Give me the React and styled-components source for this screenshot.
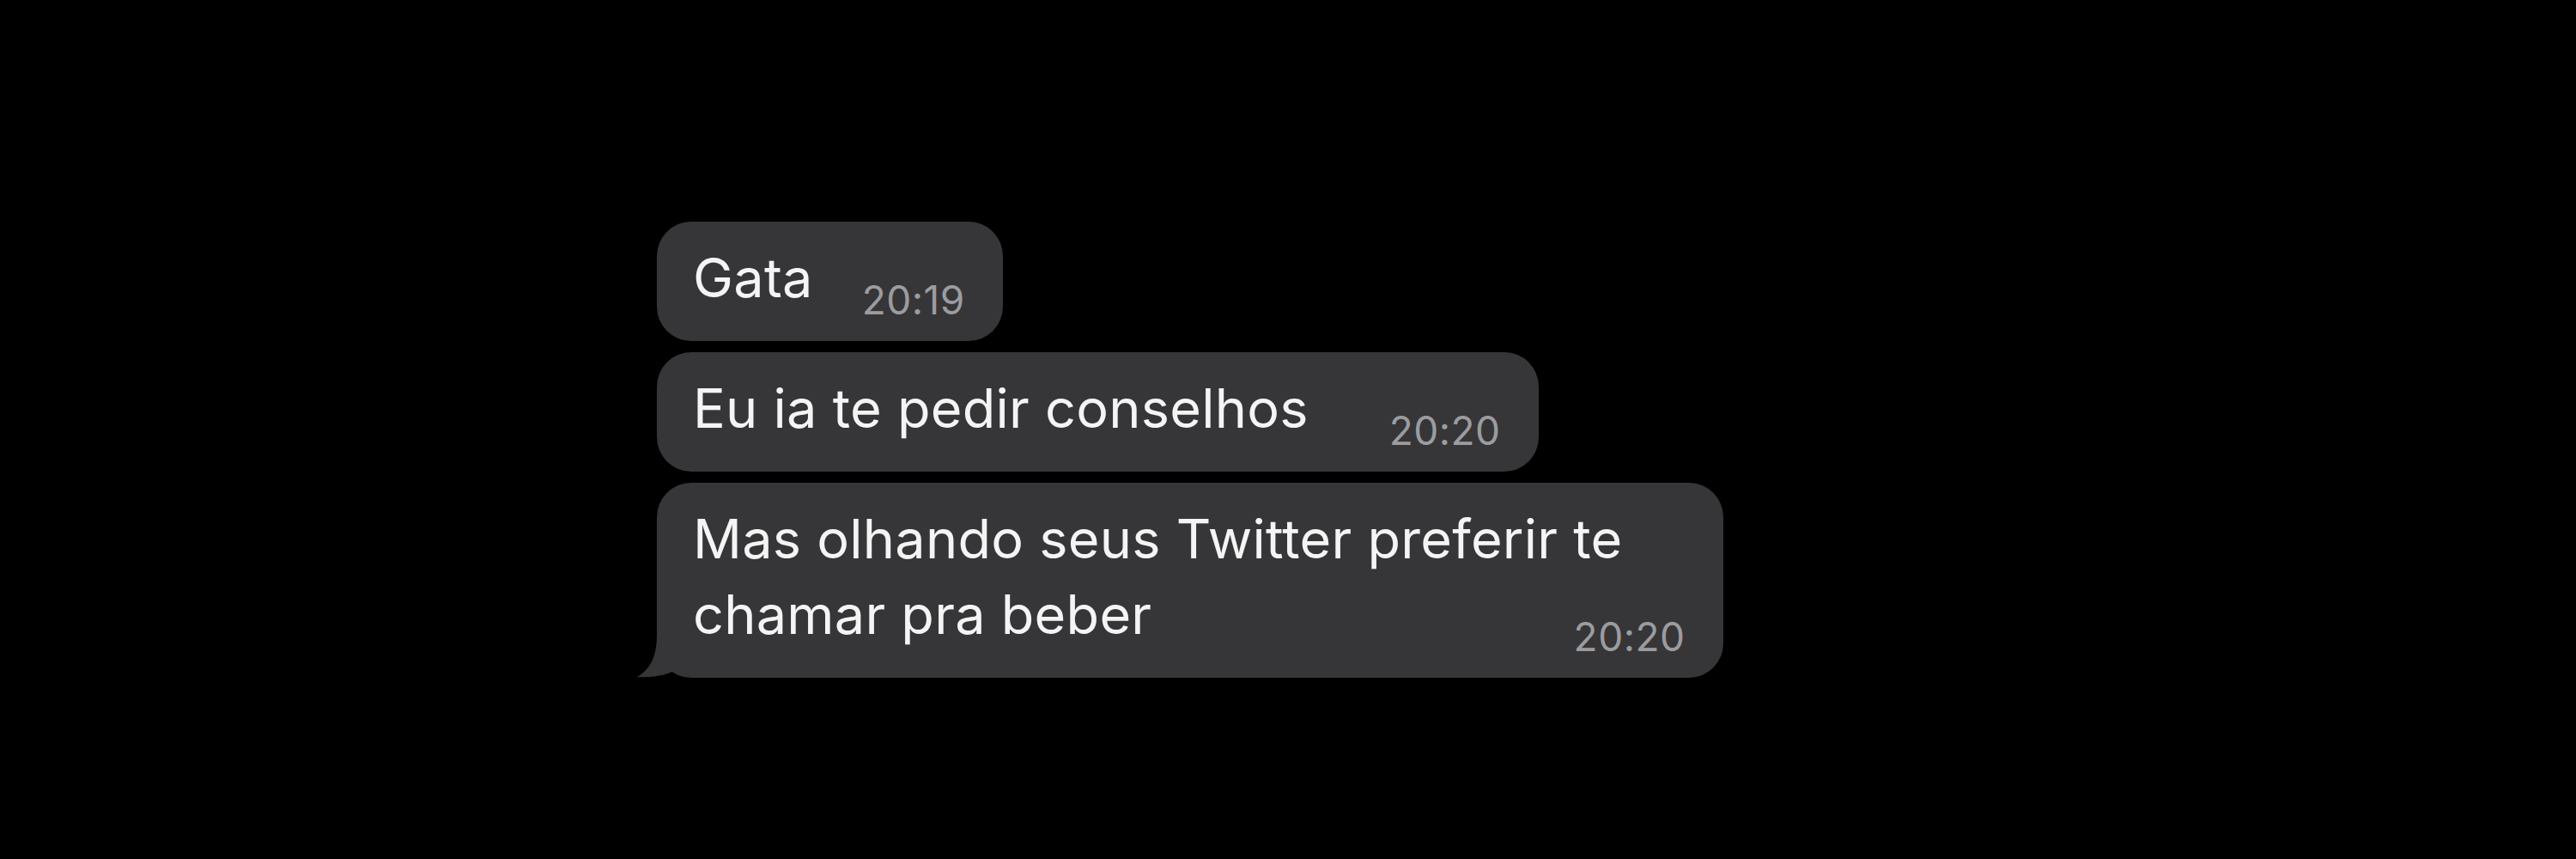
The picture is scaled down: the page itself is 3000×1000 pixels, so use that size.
import React from "react";
import styled, { createGlobalStyle } from "styled-components";

const GlobalStyle = createGlobalStyle`
	html, body {
		margin: 0;
		padding: 0;
		background: #000;
	}
	body {
		font-family: Inter, "Liberation Sans", Arial, sans-serif;
		-webkit-font-smoothing: antialiased;
	}
`;

const Screen = styled.div`
	width: 3000px;
	height: 1000px;
	background: #000;
	box-sizing: border-box;
	padding: 258px 0 0 765px;
`;

const Thread = styled.div`
	display: flex;
	flex-direction: column;
	align-items: flex-start;
	gap: 13px;
`;

const Bubble = styled.div`
	position: relative;
	display: flex;
	flex-direction: column;
	box-sizing: border-box;
	padding: 21px 44px 25px 42px;
	background: #363638;
	border-radius: 40px;
`;

const Line = styled.div`
	padding-right: ${(p) => p.$trail || 0}px;
	font-size: 63px;
	line-height: 88px;
	color: #f4f4f4;
	letter-spacing: 0.25px;
	white-space: nowrap;
`;

const LastRow = styled.div`
	display: flex;
	align-items: flex-end;
	justify-content: space-between;
	gap: ${(p) => p.$space}px;
`;

const LastLine = styled(Line)`
	margin-bottom: 5px;
`;

const Time = styled.span`
	flex-shrink: 0;
	font-size: 46px;
	line-height: 46px;
	color: #9c9c9e;
	letter-spacing: 0.5px;
`;

const Tail = styled.svg`
	position: absolute;
	left: -23px;
	bottom: 0;
	width: 62px;
	height: 50px;
`;

const messages = [
	{ id: 1, lines: ["Gata"], time: "20:19", space: 57 },
	{ id: 2, lines: ["Eu ia te pedir conselhos"], time: "20:20", space: 94 },
	{
		id: 3,
		lines: ["Mas olhando seus Twitter preferir te", "chamar pra beber"],
		time: "20:20",
		space: 40,
		trail: 73,
		tail: true,
	},
];

const App = () => {
	return (
		<>
			<GlobalStyle />
			<Screen>
				<Thread>
					{messages.map((m) => {
						const first = m.lines.slice(0, -1);
						const last = m.lines[m.lines.length - 1];
						return (
							<Bubble key={m.id}>
								{first.map((l) => (
									<Line key={l} $trail={m.trail}>
										{l}
									</Line>
								))}
								<LastRow $space={m.space}>
									<LastLine>{last}</LastLine>
									<Time>{m.time}</Time>
								</LastRow>
								{m.tail && (
									<Tail viewBox="0 0 62 50">
										<path
											d="M23 0 C23 24 16 40 0 49 C14 50 30 48 41 43 L62 30 L62 0 Z"
											fill="#363638"
										/>
									</Tail>
								)}
							</Bubble>
						);
					})}
				</Thread>
			</Screen>
		</>
	);
};

export default App;
